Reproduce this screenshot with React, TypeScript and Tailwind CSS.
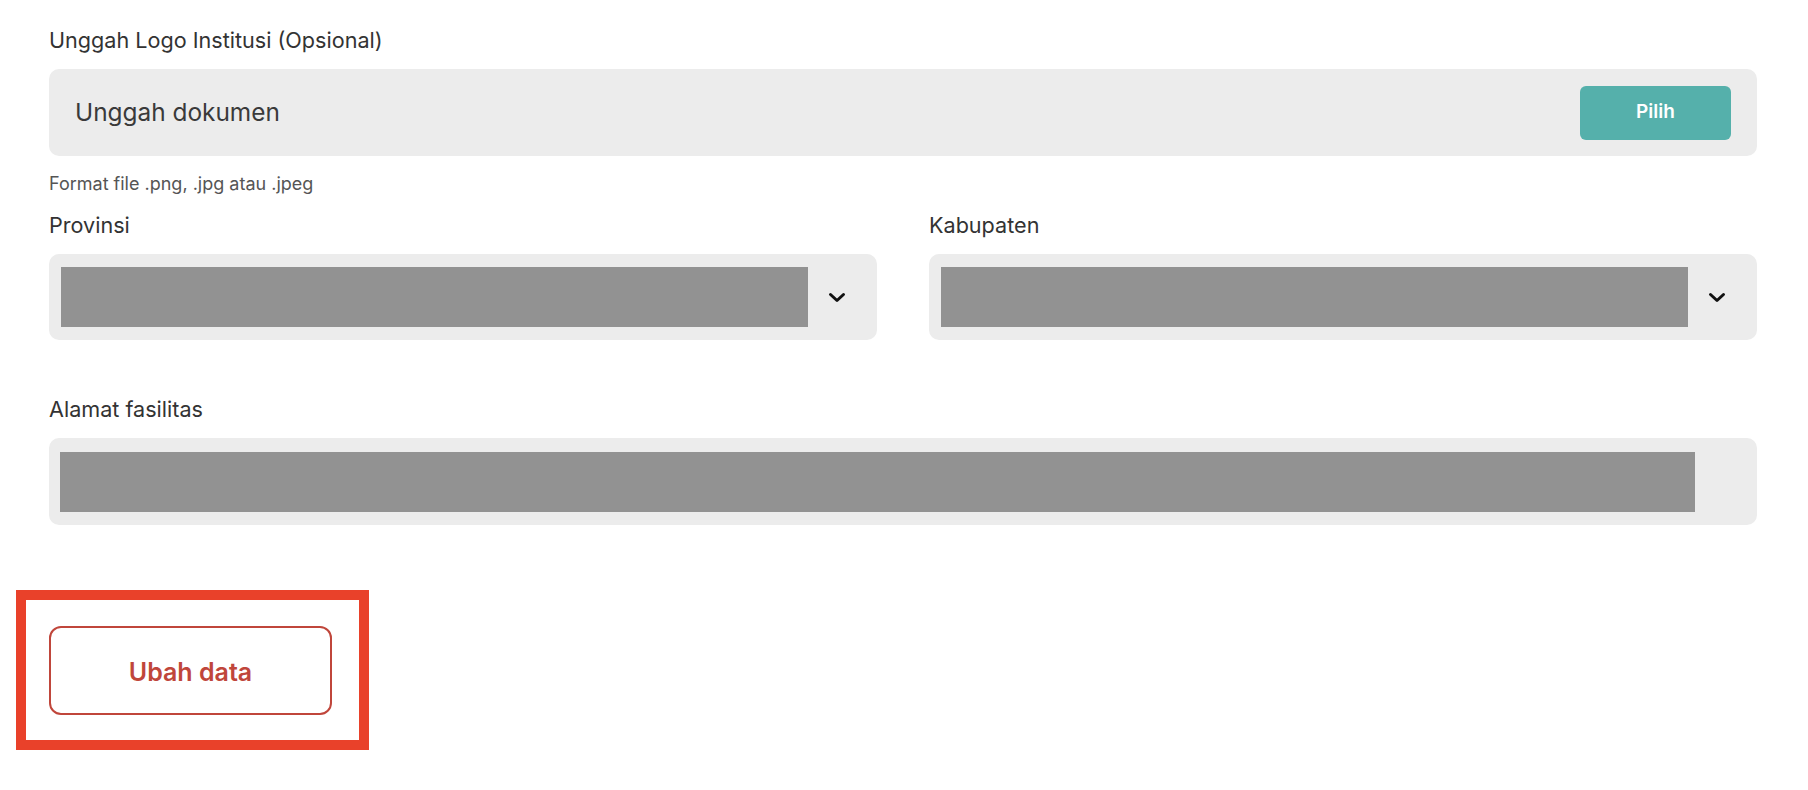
import React from 'react';

const Chevron: React.FC = () => (
  <svg width="18" height="11" viewBox="0 0 18 11" className="ml-[20px] shrink-0">
    <polyline points="2.5,2.5 9,8.5 15.5,2.5" fill="none" stroke="#111" strokeWidth="3" strokeLinecap="round" strokeLinejoin="round" />
  </svg>
);

const SelectField: React.FC<{ label: string }> = ({ label }) => (
  <div>
    <label className="block text-[21.6px] leading-[28px] text-[#333] mb-[15px]">{label}</label>
    <div className="h-[86px] rounded-[10px] bg-[#ececec] flex items-center pl-[12px]">
      <div className="w-[747px] h-[60px] bg-[#929292]" />
      <Chevron />
    </div>
  </div>
);

export default function App() {
  return (
    <div className="min-h-screen bg-white pl-[49px] pr-[51px] pt-[26px] font-['Inter',sans-serif]">
      {/* Logo upload */}
      <label className="block text-[21.6px] leading-[28px] text-[#333] mb-[15px]">Unggah Logo Institusi (Opsional)</label>
      <div className="h-[87px] rounded-[10px] bg-[#ececec] flex items-center justify-between pl-[26px] pr-[26px]">
        <span className="text-[24.4px] text-[#3a3a3a]">Unggah dokumen</span>
        <button className="w-[151px] h-[54px] rounded-[6px] bg-[#55b0ab] text-white font-semibold text-[19px]">
          Pilih
        </button>
      </div>
      <p className="mt-[18px] text-[18px] leading-[20px] text-[#555]">Format file .png, .jpg atau .jpeg</p>

      {/* Provinsi / Kabupaten */}
      <div className="grid grid-cols-2 gap-x-[52px] mt-[17px]">
        <SelectField label="Provinsi" />
        <SelectField label="Kabupaten" />
      </div>

      {/* Alamat */}
      <div className="mt-[55px]">
        <label className="block text-[21.6px] leading-[28px] text-[#333] mb-[15px]">Alamat fasilitas</label>
        <div className="h-[87px] rounded-[10px] bg-[#ececec] flex items-center pl-[11px]">
          <div className="w-[1635px] h-[60px] bg-[#929292]" />
        </div>
      </div>

      {/* highlighted action */}
      <div className="mt-[65px] -ml-[33px] w-[353px] h-[160px] border-[10px] border-[#e9412a] pl-[23px] pt-[26px]">
        <button className="w-[283px] h-[89px] rounded-[12px] border-2 border-[#c0463b] text-[#c0463b] font-semibold text-[25px] pt-[5px]">
          Ubah data
        </button>
      </div>
    </div>
  );
}
